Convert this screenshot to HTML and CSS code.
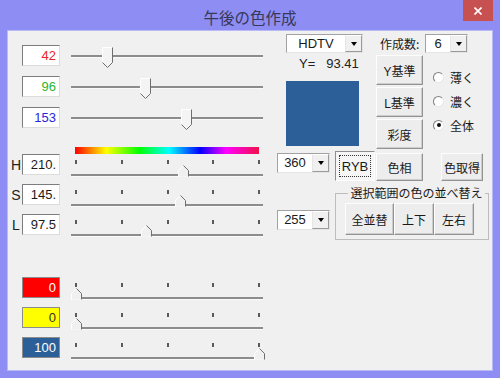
FILE: index.html
```html
<!DOCTYPE html>
<html lang="ja">
<head>
  <meta charset="UTF-8">
  <title>午後の色作成</title>
  <link rel="stylesheet" href="styles.css">
</head>
<body>

  <div class="window">
    <div class="titlebar">
      <span class="title">午後の色作成</span>
      <span class="close">
        <svg width="8" height="8" viewBox="0 0 8 8"><path d="M0.5 0.5L7.5 7.5M7.5 0.5L0.5 7.5" stroke="#fff" stroke-width="1.6"/></svg>
      </span>
    </div>

    <div class="client">
      <!-- left: sliders -->
      <div class="left">
        <div class="rows rgb">
          <div class="row">
            <span class="lbl"></span>
            <div class="box num red-text">42</div>
            <div class="slider plain">
              <div class="track"></div>
              <div class="thumb down" style="left:31px"><svg width="11" height="21" viewBox="0 0 11 21"><path d="M0.5 15.5V0.5H10.5V15.5L5.5 20.5Z" fill="#f4f4f4"/><path d="M0.5 15.5V0.5H10" fill="none" stroke="#fff"/><path d="M10.5 0.5V15.5L5.5 20.5L0.5 15.5" fill="none" stroke="#6e6e6e"/></svg></div>
            </div>
          </div>
          <div class="row">
            <span class="lbl"></span>
            <div class="box num green-text">96</div>
            <div class="slider plain">
              <div class="track"></div>
              <div class="thumb down" style="left:69px"><svg width="11" height="21" viewBox="0 0 11 21"><path d="M0.5 15.5V0.5H10.5V15.5L5.5 20.5Z" fill="#f4f4f4"/><path d="M0.5 15.5V0.5H10" fill="none" stroke="#fff"/><path d="M10.5 0.5V15.5L5.5 20.5L0.5 15.5" fill="none" stroke="#6e6e6e"/></svg></div>
            </div>
          </div>
          <div class="row">
            <span class="lbl"></span>
            <div class="box num blue-text">153</div>
            <div class="slider plain">
              <div class="track"></div>
              <div class="thumb down" style="left:110px"><svg width="11" height="21" viewBox="0 0 11 21"><path d="M0.5 15.5V0.5H10.5V15.5L5.5 20.5Z" fill="#f4f4f4"/><path d="M0.5 15.5V0.5H10" fill="none" stroke="#fff"/><path d="M10.5 0.5V15.5L5.5 20.5L0.5 15.5" fill="none" stroke="#6e6e6e"/></svg></div>
            </div>
          </div>
        </div>

        <div class="rainbow"></div>

        <div class="rows hsl">
          <div class="row">
            <span class="lbl">H</span>
            <div class="box num">210.</div>
            <div class="slider ticked">
              <div class="ticks"><i></i><i></i><i></i><i></i><i></i></div>
              <div class="track"></div>
              <div class="thumb up" style="left:107px"><svg width="11" height="12" viewBox="0 0 11 12"><path d="M0.5 11.5V5.5L5.5 0.5L10.5 5.5V11.5Z" fill="#f0f0f0"/><path d="M0.5 11.5V5.5L5.5 0.5" fill="none" stroke="#fff"/><path d="M5.5 0.5L10.5 5.5V11.5" fill="none" stroke="#6e6e6e"/></svg></div>
            </div>
          </div>
          <div class="row">
            <span class="lbl">S</span>
            <div class="box num">145.</div>
            <div class="slider ticked">
              <div class="ticks"><i></i><i></i><i></i><i></i><i></i></div>
              <div class="track"></div>
              <div class="thumb up" style="left:104px"><svg width="11" height="12" viewBox="0 0 11 12"><path d="M0.5 11.5V5.5L5.5 0.5L10.5 5.5V11.5Z" fill="#f0f0f0"/><path d="M0.5 11.5V5.5L5.5 0.5" fill="none" stroke="#fff"/><path d="M5.5 0.5L10.5 5.5V11.5" fill="none" stroke="#6e6e6e"/></svg></div>
            </div>
          </div>
          <div class="row">
            <span class="lbl">L</span>
            <div class="box num">97.5</div>
            <div class="slider ticked">
              <div class="ticks"><i></i><i></i><i></i><i></i><i></i></div>
              <div class="track"></div>
              <div class="thumb up" style="left:70px"><svg width="11" height="12" viewBox="0 0 11 12"><path d="M0.5 11.5V5.5L5.5 0.5L10.5 5.5V11.5Z" fill="#f0f0f0"/><path d="M0.5 11.5V5.5L5.5 0.5" fill="none" stroke="#fff"/><path d="M5.5 0.5L10.5 5.5V11.5" fill="none" stroke="#6e6e6e"/></svg></div>
            </div>
          </div>
        </div>

        <div class="rows mix">
          <div class="row">
            <span class="lbl"></span>
            <div class="box num swatch-red">0</div>
            <div class="slider ticked">
              <div class="ticks"><i></i><i></i><i></i><i></i><i></i></div>
              <div class="track"></div>
              <div class="thumb up" style="left:0px"><svg width="11" height="12" viewBox="0 0 11 12"><path d="M0.5 11.5V5.5L5.5 0.5L10.5 5.5V11.5Z" fill="#f0f0f0"/><path d="M0.5 11.5V5.5L5.5 0.5" fill="none" stroke="#fff"/><path d="M5.5 0.5L10.5 5.5V11.5" fill="none" stroke="#6e6e6e"/></svg></div>
            </div>
          </div>
          <div class="row">
            <span class="lbl"></span>
            <div class="box num swatch-yellow">0</div>
            <div class="slider ticked">
              <div class="ticks"><i></i><i></i><i></i><i></i><i></i></div>
              <div class="track"></div>
              <div class="thumb up" style="left:0px"><svg width="11" height="12" viewBox="0 0 11 12"><path d="M0.5 11.5V5.5L5.5 0.5L10.5 5.5V11.5Z" fill="#f0f0f0"/><path d="M0.5 11.5V5.5L5.5 0.5" fill="none" stroke="#fff"/><path d="M5.5 0.5L10.5 5.5V11.5" fill="none" stroke="#6e6e6e"/></svg></div>
            </div>
          </div>
          <div class="row">
            <span class="lbl"></span>
            <div class="box num swatch-blue">100</div>
            <div class="slider ticked">
              <div class="ticks"><i></i><i></i><i></i><i></i><i></i></div>
              <div class="track"></div>
              <div class="thumb up" style="left:183px"><svg width="11" height="12" viewBox="0 0 11 12"><path d="M0.5 11.5V5.5L5.5 0.5L10.5 5.5V11.5Z" fill="#f0f0f0"/><path d="M0.5 11.5V5.5L5.5 0.5" fill="none" stroke="#fff"/><path d="M5.5 0.5L10.5 5.5V11.5" fill="none" stroke="#6e6e6e"/></svg></div>
            </div>
          </div>
        </div>
      </div>

      <!-- right: options and buttons -->
      <div class="right">
        <div class="top">
          <div class="col1">
            <div class="combo w77"><span class="val">HDTV</span><span class="drop"></span></div>
            <div class="yval"><span>Y=</span><span class="ynum">93.41</span></div>
            <div class="swatch"></div>
          </div>
          <div class="col2">
            <div class="count-label">作成数:</div>
            <div class="btn tall">Y基準</div>
            <div class="btn tall">L基準</div>
            <div class="btn tall">彩度</div>
          </div>
          <div class="col3">
            <div class="combo w43"><span class="val">6</span><span class="drop"></span></div>
            <div class="radios">
              <label class="radio"><span class="circle"></span>薄く</label>
              <label class="radio"><span class="circle"></span>濃く</label>
              <label class="radio"><span class="circle checked"></span>全体</label>
            </div>
          </div>
        </div>

        <div class="row-ryb">
          <div class="combo w53 low"><span class="val">360</span><span class="drop"></span></div>
          <div class="ryb"><span>RYB</span></div>
          <div class="btn hue">色相</div>
          <div class="btn pick">色取得</div>
        </div>

        <div class="row-group">
          <div class="combo w53 low255"><span class="val">255</span><span class="drop"></span></div>
          <fieldset class="group">
            <legend>選択範囲の色の並べ替え</legend>
            <div class="group-btns">
              <div class="btn sort-all">全並替</div>
              <div class="btn sort-small">上下</div>
              <div class="btn sort-small">左右</div>
            </div>
          </fieldset>
        </div>
      </div>
    </div>
  </div>

</body>
</html>
```

FILE: styles.css
```css
body {
  margin: 0;
  font-family: "Noto Sans CJK JP", sans-serif;
  font-size: 12px;
  color: #1a1a1a;
}

.window {
  position: relative;
  width: 500px;
  height: 378px;
  background-color: #8d8df3;
}

.titlebar {
  height: 31px;
  display: flex;
  justify-content: center;
  align-items: center;
}

.title {
  font-size: 15.5px;
  line-height: 20px;
  color: #38385a;
  padding-top: 3px;
}

.close {
  position: absolute;
  top: 0;
  right: 7px;
  width: 30px;
  height: 21px;
  background-color: #c75050;
  display: flex;
  justify-content: center;
  align-items: center;
}

.client {
  margin: 0 8px;
  height: 339px;
  background-color: #f0f0f0;
  box-shadow: 0 0 0 1px #b9b9f8;
  display: flex;
}

/* ---- left column ---- */
.left {
  width: 262px;
  padding-top: 14px;
}

.rows {
  display: flex;
  flex-direction: column;
}

.row {
  display: flex;
  align-items: flex-start;
}

.rgb { gap: 10px; }
.rgb .row { height: 21px; }

.hsl { gap: 8px; }
.hsl .row { height: 22px; }

.mix {
  gap: 9px;
  margin-top: 41px;
}
.mix .row { height: 21px; }

.lbl {
  width: 12px;
  margin-left: 2px;
  font-family: "Liberation Sans", sans-serif;
  font-size: 14px;
  line-height: 22px;
  text-align: center;
  color: #222;
}

.box {
  box-sizing: border-box;
  width: 38px;
  height: 21px;
  background-color: #fff;
  border: 1px solid;
  border-color: #7c7c7c #dcdcdc #dcdcdc #7c7c7c;
  padding-right: 3px;
  text-align: right;
}

.num {
  font-family: "Liberation Sans", sans-serif;
  font-size: 13px;
  line-height: 19px;
}

.red-text { color: #e82626; }
.green-text { color: #2db52d; }
.blue-text { color: #2626d8; }

.swatch-red, .swatch-yellow, .swatch-blue {
  border: 1px solid #8c8c8c;
}
.swatch-red { background-color: #ff0000; color: #fff; }
.swatch-yellow { background-color: #ffff00; color: #333; }
.swatch-blue { background-color: #2c5f97; color: #fff; }

.slider {
  position: relative;
  width: 192px;
  margin-left: 11px;
}

.slider.plain { height: 21px; }
.slider.ticked { height: 23px; }

.track {
  position: absolute;
  left: 0;
  right: 0;
  height: 2px;
  background-color: #8c8c8c;
  border-bottom: 1px solid #fafafa;
}

.plain .track { top: 10px; }
.ticked .track { top: 20px; }

.ticks {
  display: flex;
  justify-content: space-between;
  padding: 6px 3px 0 4px;
}

.ticks i {
  width: 2px;
  height: 4px;
  background-color: #5a5a5a;
}

.thumb {
  position: absolute;
  width: 11px;
}

.thumb svg { display: block; }
.thumb.down { top: 2px; }
.thumb.up { top: 11px; }

.rainbow {
  width: 184px;
  height: 7px;
  margin: 19px 0 0 67px;
  background: linear-gradient(to right, #ff0000 0%, #ffff00 17%, #00ff00 35%, #00ffff 51%, #0000ff 68%, #ff00ff 82%, #f0104a 100%);
}

/* ---- right column ---- */
.right {
  flex: 1;
  padding-top: 3px;
}

.top {
  display: flex;
  margin-left: 16px;
}

.col1 { width: 77px; }

.col2 {
  width: 47px;
  margin-left: 13px;
}

.col3 { margin-left: 2px; }

.combo {
  box-sizing: border-box;
  height: 19px;
  display: flex;
  background-color: #fff;
  border: 1px solid;
  border-color: #a2a2a2 #e4e4e4 #e4e4e4 #a2a2a2;
}

.combo .val {
  flex: 1;
  text-align: center;
  font-family: "Liberation Sans", sans-serif;
  font-size: 13px;
  line-height: 17px;
}

.combo .drop {
  box-sizing: border-box;
  width: 17px;
  background-color: #f0f0f0;
  border: 1px solid;
  border-color: #fff #9a9a9a #9a9a9a #e6e6e6;
  display: flex;
  justify-content: center;
  align-items: center;
}

.combo .drop::after {
  content: "";
  border-left: 3.5px solid transparent;
  border-right: 3.5px solid transparent;
  border-top: 4px solid #000;
}

.w77 { width: 77px; }
.w43 { width: 43px; }
.w53 { width: 53px; height: 20px; }

.yval {
  display: flex;
  height: 14px;
  margin-top: 4px;
  padding-left: 13px;
  font-family: "Liberation Sans", sans-serif;
  font-size: 13px;
  line-height: 14px;
  color: #222;
}

.yval .ynum { margin-left: 11px; }

.swatch {
  width: 73px;
  height: 65px;
  margin-top: 10px;
  background-color: #2c5f97;
}

.count-label {
  height: 19px;
  line-height: 19px;
  margin-left: 4px;
  white-space: nowrap;
}

.btn {
  box-sizing: border-box;
  display: flex;
  justify-content: center;
  align-items: center;
  background-color: #ededed;
  border: 1px solid;
  border-color: #fdfdfd #939393 #939393 #fdfdfd;
  box-shadow: inset -1px -1px 0 #cdcdcd;
  font-family: "Liberation Sans", "Noto Sans CJK JP", sans-serif;
  font-size: 12px;
  white-space: nowrap;
}

.btn.tall {
  height: 30px;
  margin-top: 2px;
}

.col2 .btn.tall:first-of-type { margin-top: 4px; }

.radios {
  margin-top: 12px;
  padding-left: 8px;
}

.radio {
  display: flex;
  align-items: center;
  height: 24px;
  gap: 6px;
}

.circle {
  box-sizing: border-box;
  width: 11px;
  height: 11px;
  border-radius: 50%;
  background-color: #fff;
  border: 1px solid;
  border-color: #7e7e7e #e8e8e8 #e8e8e8 #7e7e7e;
  display: flex;
  justify-content: center;
  align-items: center;
}

.circle.checked::after {
  content: "";
  width: 4px;
  height: 4px;
  border-radius: 50%;
  background-color: #111;
}

.row-ryb {
  display: flex;
  align-items: flex-start;
  margin: 2px 0 0 7px;
}

.combo.low { margin-top: 2px; }

.ryb {
  box-sizing: border-box;
  width: 40px;
  height: 30px;
  margin-left: 5px;
  padding: 3px;
  display: flex;
  background-color: #f6f6f6;
  border: 1px solid;
  border-color: #8e8e8e #fff #fff #8e8e8e;
}

.ryb span {
  flex: 1;
  border: 1px dotted #333;
  display: flex;
  justify-content: center;
  align-items: center;
  font-family: "Liberation Sans", sans-serif;
  font-size: 13px;
}

.btn.hue {
  width: 47px;
  height: 28px;
  margin: 2px 0 0 1px;
}

.btn.pick {
  width: 42px;
  height: 28px;
  margin: 2px 0 0 18px;
}

.row-group {
  display: flex;
  align-items: flex-start;
  margin: 4px 0 0 7px;
}

.combo.low255 { margin-top: 25px; }

.group {
  box-sizing: border-box;
  width: 154px;
  margin: 0 0 0 5px;
  padding: 2px 0 4px 9px;
  border: 1px solid #bdbdbd;
  min-width: 0;
}

.group legend {
  margin: 0 auto;
  padding: 0 2px;
  font-size: 12px;
  line-height: 16px;
}

.group-btns {
  display: flex;
}

.btn.sort-all {
  width: 49px;
  height: 32px;
}

.btn.sort-small {
  width: 40px;
  height: 32px;
}
```
